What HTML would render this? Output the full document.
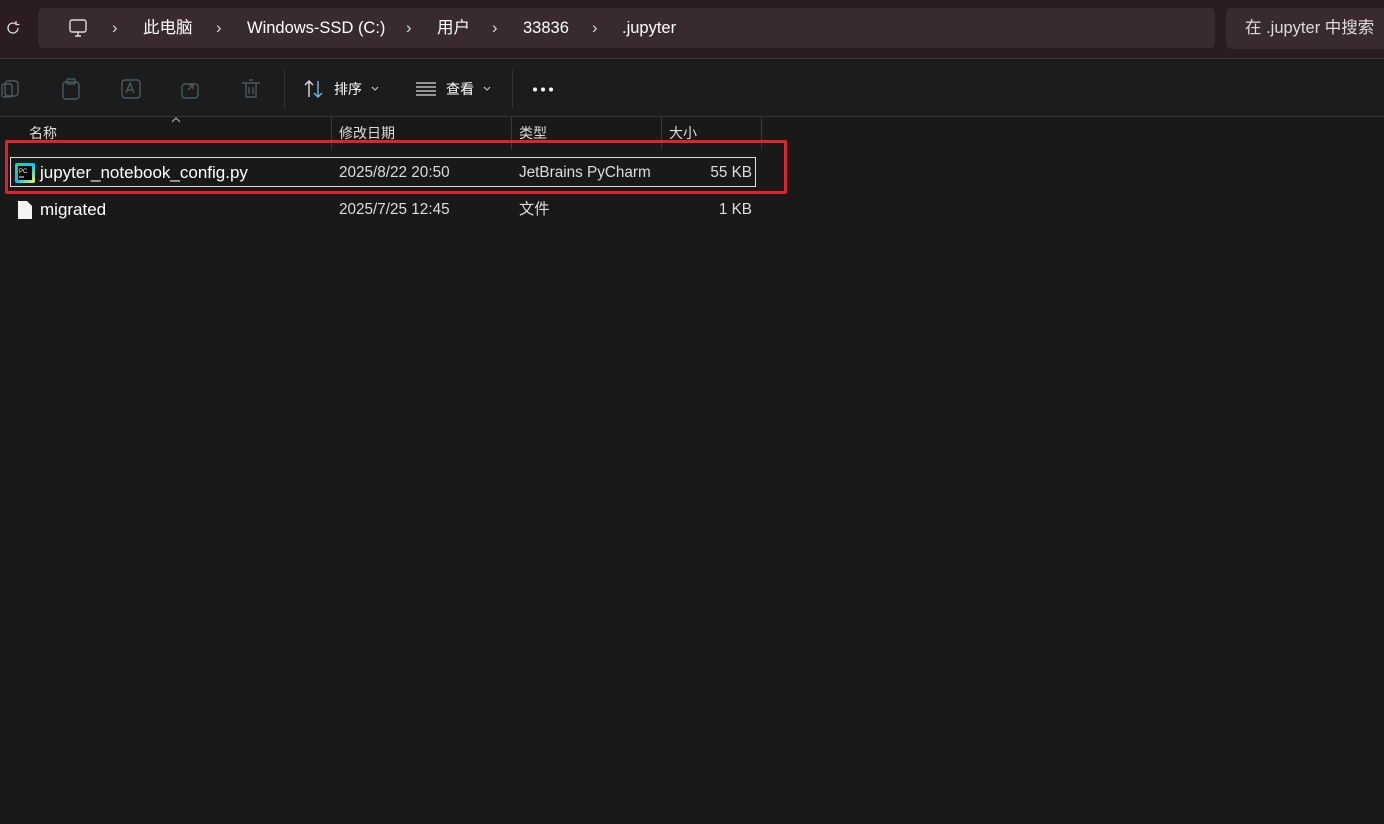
<!DOCTYPE html><html><head><meta charset="utf-8"><style>
body{margin:0;width:1384px;height:824px;background:#191919;font-family:"Liberation Sans","Noto Sans CJK SC",sans-serif;color:#fff;overflow:hidden;position:relative}
.a{position:absolute;white-space:nowrap;line-height:22px}
.t{font-size:16.5px}
.s{font-size:14px}
.r{font-size:15.3px;color:#ddd}
</style></head><body>
<div class="a" style="left:0;top:0;width:1384px;height:58px;background:#2a1c20;border-bottom:1px solid #3a3a3a"></div>
<svg class="a" style="left:5px;top:20px" width="16" height="16" viewBox="0 0 16 16"><path d="M13 8a5 5 0 1 1-2-4M11 1v3.5h3.5" fill="none" stroke="#ddd" stroke-width="1.3"/></svg>
<div class="a" style="left:38px;top:8px;width:1177px;height:40px;background:#382a2e;border-radius:6px"></div>
<svg class="a" style="left:68px;top:18px" width="20" height="20" viewBox="0 0 20 20"><rect x="2" y="2" width="16" height="12" rx="2" fill="none" stroke="#ddd" stroke-width="1.4"/><path d="M7 18h6M10 14v4" stroke="#ddd" stroke-width="1.4"/></svg>
<div class="a t" style="left:112px;top:17px;color:#ddd">›</div>
<div class="a t" style="left:143px;top:17px">此电脑</div>
<div class="a t" style="left:216px;top:17px;color:#ddd">›</div>
<div class="a t" style="left:247px;top:17px">Windows-SSD (C:)</div>
<div class="a t" style="left:406px;top:17px;color:#ddd">›</div>
<div class="a t" style="left:437px;top:17px">用户</div>
<div class="a t" style="left:492px;top:17px;color:#ddd">›</div>
<div class="a t" style="left:523px;top:17px">33836</div>
<div class="a t" style="left:592px;top:17px;color:#ddd">›</div>
<div class="a t" style="left:622px;top:17px">.jupyter</div>
<div class="a" style="left:1226px;top:8px;width:170px;height:41px;background:#382a2e;border-radius:6px"></div>
<div class="a t" style="left:1245px;top:17px;color:#ddd">在 .jupyter 中搜索</div>
<div class="a" style="left:0;top:59px;width:1384px;height:57px;background:#1c1c1c;border-bottom:1px solid #333"></div>
<svg class="a" style="left:0;top:76px" width="270" height="26" viewBox="0 0 270 26" fill="none" stroke="#4a5a60" stroke-width="1.4"><rect x="5" y="5" width="13" height="15" rx="3"/><rect x="2" y="8" width="10" height="13" rx="2"/><rect x="63" y="6" width="16" height="17" rx="3"/><rect x="67" y="3" width="8" height="5" rx="1"/><rect x="122" y="4" width="18" height="18" rx="3"/><path d="M126 17l4-10 4 10M127 14h6"/><rect x="182" y="8" width="16" height="14" rx="3"/><path d="M188 14l5-5h-4M193 9v4"/><path d="M242 7h18M246 7v14h10V7M249 4h4M249 11v7M253 11v7"/></svg>
<div class="a" style="left:284px;top:70px;width:1px;height:38px;background:#333"></div>
<svg class="a" style="left:303px;top:79px" width="22" height="20" viewBox="0 0 22 20" fill="none" stroke-width="1.4"><path d="M6 18V2M2 6l4-4 4 4" stroke="#ddd"/><path d="M15 2v16M11 14l4 4 4-4" stroke="#6cb8f0"/></svg>
<div class="a s" style="left:334px;top:78px">排序</div>
<svg class="a" style="left:371px;top:86px" width="8" height="5"><path d="M1 1l3 3 3-3" fill="none" stroke="#ccc"/></svg>
<svg class="a" style="left:416px;top:82px" width="20" height="14"><path d="M0 1h20M0 5h20M0 9h20M0 13h20" stroke="#ddd" stroke-width="1.3"/></svg>
<div class="a s" style="left:446px;top:78px">查看</div>
<svg class="a" style="left:483px;top:86px" width="8" height="5"><path d="M1 1l3 3 3-3" fill="none" stroke="#ccc"/></svg>
<div class="a" style="left:512px;top:70px;width:1px;height:38px;background:#333"></div>
<svg class="a" style="left:532px;top:87px" width="24" height="5"><circle cx="3" cy="2.5" r="2" fill="#fff"/><circle cx="11" cy="2.5" r="2" fill="#fff"/><circle cx="19" cy="2.5" r="2" fill="#fff"/></svg>
<svg class="a" style="left:171px;top:117px" width="10" height="6"><path d="M1 5l4-4 4 4" fill="none" stroke="#bbb"/></svg>
<div class="a s" style="left:29px;top:122px;color:#ddd">名称</div>
<div class="a s" style="left:339px;top:122px;color:#ddd">修改日期</div>
<div class="a s" style="left:519px;top:122px;color:#ddd">类型</div>
<div class="a s" style="left:669px;top:122px;color:#ddd">大小</div>
<div class="a" style="left:331px;top:117px;width:1px;height:32px;background:#3a3a3a"></div>
<div class="a" style="left:511px;top:117px;width:1px;height:32px;background:#3a3a3a"></div>
<div class="a" style="left:661px;top:117px;width:1px;height:32px;background:#3a3a3a"></div>
<div class="a" style="left:761px;top:117px;width:1px;height:32px;background:#3a3a3a"></div>
<div class="a" style="left:10px;top:157px;width:744px;height:28px;border:1px solid #ddd"></div>
<div class="a" style="left:5px;top:140px;width:776px;height:48px;border:3px solid #e0222a;border-radius:2px"></div>
<svg class="a" style="left:15px;top:163px" width="20" height="20" viewBox="0 0 20 20"><defs><linearGradient id="g" x1="0" y1="0" x2="1" y2="1"><stop offset="0" stop-color="#21d789"/><stop offset=".5" stop-color="#07c3f2"/><stop offset="1" stop-color="#fcf84a"/></linearGradient></defs><rect x="0" y="0" width="20" height="20" rx="2" fill="url(#g)"/><rect x="3" y="3" width="14" height="14" fill="#000"/><text x="4" y="10" font-size="6" fill="#fff" font-family="Liberation Sans">PC</text><path d="M4 14h5" stroke="#fff"/></svg>
<div class="a" style="left:40px;top:162px;font-size:17px">jupyter_notebook_config.py</div>
<div class="a r" style="left:339px;top:162px">2025/8/22 20:50</div>
<div class="a r" style="left:519px;top:162px">JetBrains PyCharm</div>
<div class="a r" style="left:652px;width:100px;text-align:right;top:162px">55 KB</div>
<svg class="a" style="left:17px;top:200px" width="16" height="20"><path d="M1 1h9l5 5v13H1z" fill="#f4f4f4"/></svg>
<div class="a" style="left:40px;top:199px;font-size:17px">migrated</div>
<div class="a r" style="left:339px;top:199px">2025/7/25 12:45</div>
<div class="a r" style="left:519px;top:199px">文件</div>
<div class="a r" style="left:652px;width:100px;text-align:right;top:199px">1 KB</div>
</body></html>
